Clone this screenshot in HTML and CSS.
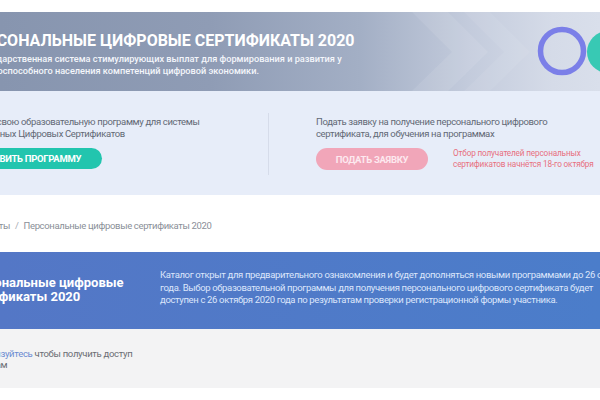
FILE: index.html
```html
<!DOCTYPE html>
<html lang="ru">
<head>
<meta charset="utf-8">
<title>Персональные цифровые сертификаты 2020</title>
<link rel="stylesheet" href="styles.css">
</head>
<body>
<div class="top-gap"></div>
<header class="hero">
  <div class="hero-text">
    <h1 class="hero-title">ПЕРСОНАЛЬНЫЕ ЦИФРОВЫЕ СЕРТИФИКАТЫ 2020</h1>
    <p class="hero-sub">Государственная система стимулирующих выплат для формирования и развития у<br>трудоспособного населения компетенций цифровой экономики.</p>
  </div>
  <div class="hero-art">
    <svg width="220" height="79" viewBox="0 0 220 79">
      <polygon points="8,0 44,0 84,40 44,79 8,79 48,40" fill="#ffffff" fill-opacity="0.09"/>
      <polygon points="60,0 86,0 126,40 86,79 60,79 100,40" fill="#ffffff" fill-opacity="0.07"/>
      <circle cx="158" cy="39" r="21.5" fill="none" stroke="#7b7fe8" stroke-width="5.5"/>
      <circle cx="204" cy="40" r="21" fill="#38c9b4"/>
    </svg>
  </div>
</header>

<section class="info">
  <div class="info-row">
    <div class="info-col info-left">
      <p class="info-text">Выберите свою образовательную программу для системы<br>Персональных Цифровых Сертификатов</p>
      <div class="btn btn-teal">ДОБАВИТЬ ПРОГРАММУ</div>
    </div>
    <div class="info-col info-right">
      <p class="info-text">Подать заявку на получение персонального цифрового<br>сертификата, для обучения на программах</p>
      <div class="apply-row">
        <div class="btn btn-pink">ПОДАТЬ ЗАЯВКУ</div>
        <p class="notice">Отбор получателей персональных<br>сертификатов начнётся 18-го октября</p>
      </div>
    </div>
  </div>
</section>

<nav class="crumbs">
  <span class="crumb">Сертификаты</span>
  <span class="sep">/</span>
  <span class="crumb">Персональные цифровые сертификаты 2020</span>
</nav>

<section class="band">
  <h2 class="band-title">Персональные цифровые<br>сертификаты 2020</h2>
  <p class="band-text">Каталог открыт для предварительного ознакомления и будет дополняться новыми программами до 26 октября<br>года. Выбор образовательной программы для получения персонального цифрового сертификата будет<br>доступен с 26 октября 2020 года по результатам проверки регистрационной формы участника.</p>
</section>

<section class="login">
  <p class="login-text"><a class="link">Авторизуйтесь</a> чтобы получить доступ<br>к курсам</p>
</section>
</body>
</html>
```
FILE: styles.css
```css
* { box-sizing: border-box; }
html, body { margin: 0; padding: 0; }
body {
  width: 600px;
  height: 400px;
  overflow: hidden;
  background: #fff;
  font-family: Roboto, "Liberation Sans", sans-serif;
  color: #5d6470;
}
p, h1, h2 { margin: 0; }

.top-gap { height: 12px; }

.hero {
  height: 79px;
  display: flex;
  justify-content: space-between;
  overflow: hidden;
  background: linear-gradient(90deg, #8795af 0%, #8f9cb5 35%, #a3afc5 60%, #c3cbdc 78%, #d5dbe8 92%, #d9dfeb 100%);
}
.hero-text {
  margin-left: -34px;
  padding-top: 20px;
  color: #fff;
  white-space: nowrap;
}
.hero-title {
  font-size: 16px;
  line-height: 18px;
  font-weight: 700;
}
.hero-sub {
  margin-top: 3px;
  padding-left: 12px;
  font-size: 9.2px;
  line-height: 12px;
  font-weight: 500;
  color: #f4f6fb;
}
.hero-art {
  flex: none;
  margin-right: -24px;
  display: flex;
}

.info {
  background: #e7edf9;
  padding: 22px 0 20px;
}
.info-row {
  display: flex;
  margin-left: -46px;
}
.info-col { padding: 3px 0 5px; }
.info-left {
  flex: none;
  width: 314px;
}
.info-right {
  flex: none;
  border-left: 1px solid #d6dcea;
  padding-left: 47px;
}
.info-text {
  font-size: 9.5px;
  line-height: 11.5px;
  letter-spacing: -0.35px;
  color: #626975;
  white-space: nowrap;
}
.btn {
  margin-top: 9px;
  height: 21px;
  border-radius: 11px;
  display: flex;
  align-items: center;
  justify-content: center;
  font-size: 9.5px;
  font-weight: 700;
  letter-spacing: -0.3px;
  color: #fff;
}
.btn-teal {
  width: 148px;
  background: #22c5ae;
}
.apply-row {
  display: flex;
  align-items: center;
  gap: 25px;
  margin-top: 9px;
}
.apply-row .btn { margin-top: 0; }
.btn-pink {
  width: 112px;
  height: 22px;
  background: #f1a6b9;
  color: #fde9ef;
}
.notice {
  font-size: 8.2px;
  line-height: 11px;
  letter-spacing: -0.15px;
  color: #e8707f;
  white-space: nowrap;
}

.crumbs {
  height: 57px;
  display: flex;
  align-items: center;
  gap: 5px;
  margin-left: -47px;
  padding-top: 3px;
  font-size: 9.5px;
  letter-spacing: -0.35px;
  color: #8a8f98;
}
.sep { color: #a5a9b1; }

.band {
  height: 77px;
  display: flex;
  background: linear-gradient(90deg, #5477c6, #4b7dca);
  color: #fff;
  white-space: nowrap;
}
.band-title {
  width: 196px;
  flex: none;
  margin-left: -36px;
  padding-top: 24px;
  font-size: 13px;
  line-height: 14px;
  font-weight: 700;
}
.band-text {
  padding-top: 17px;
  font-size: 9.5px;
  line-height: 12.5px;
  letter-spacing: -0.35px;
  color: #dce6fb;
}

.login {
  height: 59px;
  background: #f3f3f4;
  padding-top: 19px;
}
.login-text {
  margin-left: -30px;
  font-size: 9.5px;
  line-height: 11px;
  letter-spacing: -0.3px;
  color: #6a6d73;
}
.link { color: #6a8bd2; }
```
